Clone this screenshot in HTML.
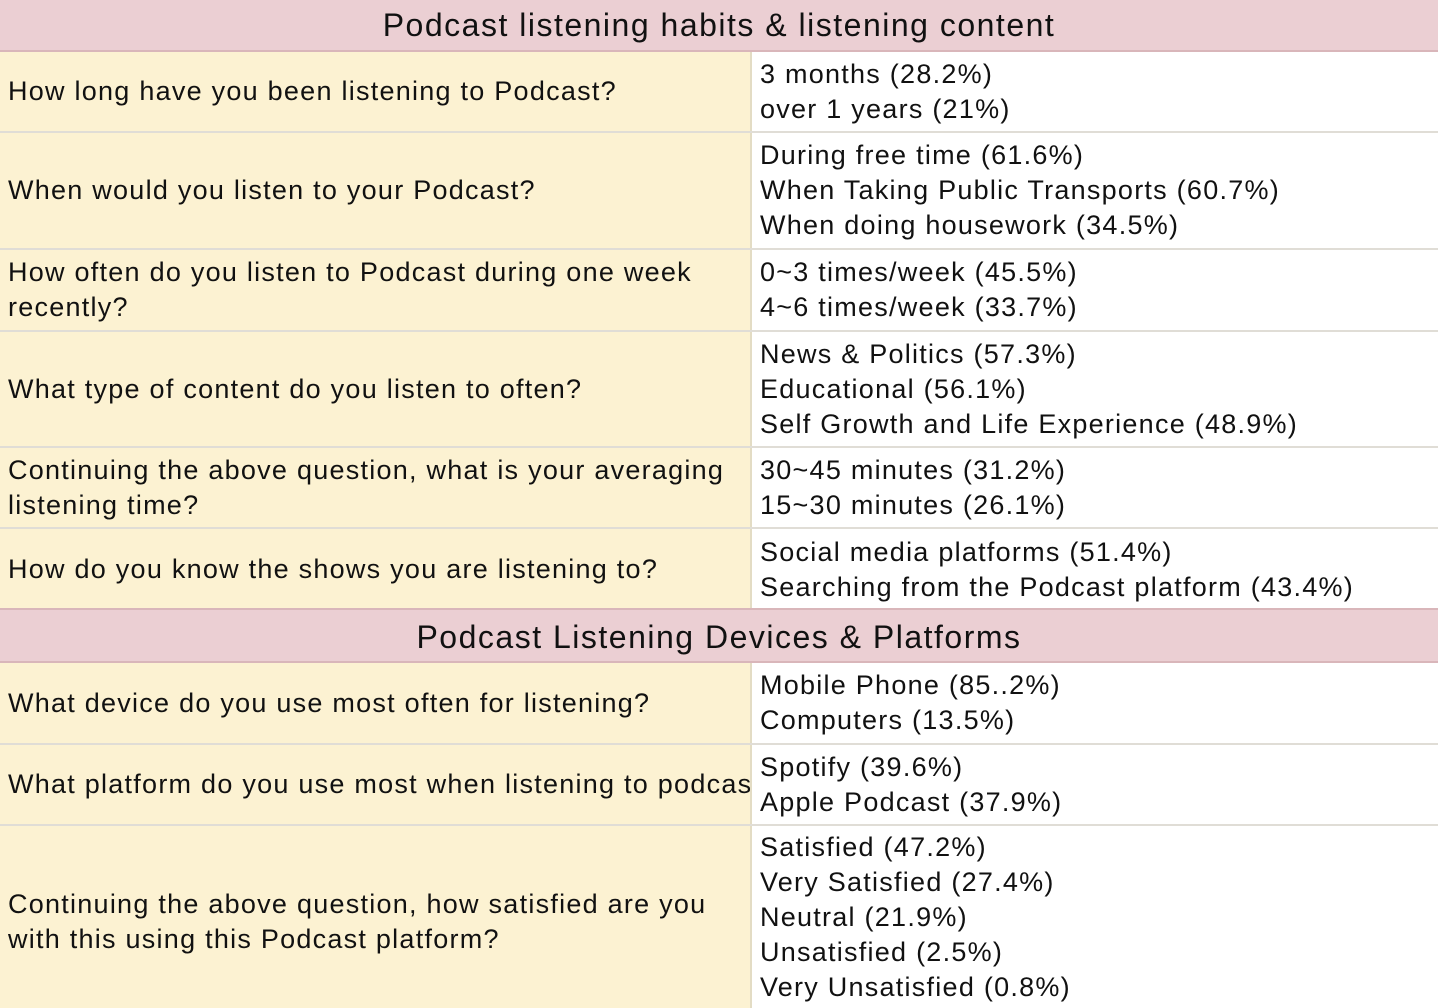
<!DOCTYPE html>
<html><head><meta charset="utf-8"><style>
body{margin:0;width:1438px;height:1008px;overflow:hidden;background:#fff;font-family:"Liberation Sans",sans-serif;color:#111;}
.r{position:absolute;left:0;width:1438px;box-sizing:border-box;}
.h{background:#ebcfd3;border-bottom:2px solid #d9b6ba;text-align:center;font-size:32px;letter-spacing:1.5px;}
.q{position:absolute;left:0;width:752px;top:0;bottom:0;background:#fcf2d2;border-right:2px solid #e3dcc4;box-sizing:border-box;padding-left:8px;display:flex;align-items:center;font-size:27px;letter-spacing:1.25px;line-height:35px;overflow:hidden;white-space:nowrap;}
.a{position:absolute;left:752px;right:0;top:0;bottom:0;padding-left:8px;display:flex;flex-direction:column;justify-content:center;font-size:27px;letter-spacing:1.25px;line-height:35px;white-space:nowrap;}
.row{border-bottom:2px solid #e0ddd6;}
</style></head><body>
<div class="r h" style="top:0;height:52px;line-height:50px">Podcast listening habits &amp; listening content</div>
<div class="r row" style="top:52px;height:81px"><div class="q">How long have you been listening to Podcast?</div><div class="a"><div>3 months (28.2%)</div><div>over 1 years (21%)</div></div></div>
<div class="r row" style="top:133px;height:117px"><div class="q">When would you listen to your Podcast?</div><div class="a"><div>During free time (61.6%)</div><div>When Taking Public Transports (60.7%)</div><div>When doing housework (34.5%)</div></div></div>
<div class="r row" style="top:250px;height:82px"><div class="q"><div>How often do you listen to Podcast during one week<br>recently?</div></div><div class="a"><div>0~3 times/week (45.5%)</div><div>4~6 times/week (33.7%)</div></div></div>
<div class="r row" style="top:332px;height:116px"><div class="q">What type of content do you listen to often?</div><div class="a"><div>News &amp; Politics (57.3%)</div><div>Educational (56.1%)</div><div>Self Growth and Life Experience (48.9%)</div></div></div>
<div class="r row" style="top:448px;height:81px"><div class="q"><div>Continuing the above question, what is your averaging<br>listening time?</div></div><div class="a"><div>30~45 minutes (31.2%)</div><div>15~30 minutes (26.1%)</div></div></div>
<div class="r row" style="top:529px;height:81px;border-bottom:none"><div class="q">How do you know the shows you are listening to?</div><div class="a"><div>Social media platforms (51.4%)</div><div>Searching from the Podcast platform (43.4%)</div></div></div>
<div class="r h" style="top:608px;height:55px;line-height:54px;border-top:2px solid #d9b6ba">Podcast Listening Devices &amp; Platforms</div>
<div class="r row" style="top:663px;height:82px"><div class="q">What device do you use most often for listening?</div><div class="a"><div>Mobile Phone (85..2%)</div><div>Computers (13.5%)</div></div></div>
<div class="r row" style="top:745px;height:81px"><div class="q">What platform do you use most when listening to podcasts?</div><div class="a" style="background:#fff"><div>Spotify (39.6%)</div><div>Apple Podcast (37.9%)</div></div></div>
<div class="r" style="top:826px;height:182px"><div class="q" style="padding-top:10px"><div>Continuing the above question, how satisfied are you<br>with this using this Podcast platform?</div></div><div class="a"><div>Satisfied (47.2%)</div><div>Very Satisfied (27.4%)</div><div>Neutral (21.9%)</div><div>Unsatisfied (2.5%)</div><div>Very Unsatisfied (0.8%)</div></div></div>
</body></html>
